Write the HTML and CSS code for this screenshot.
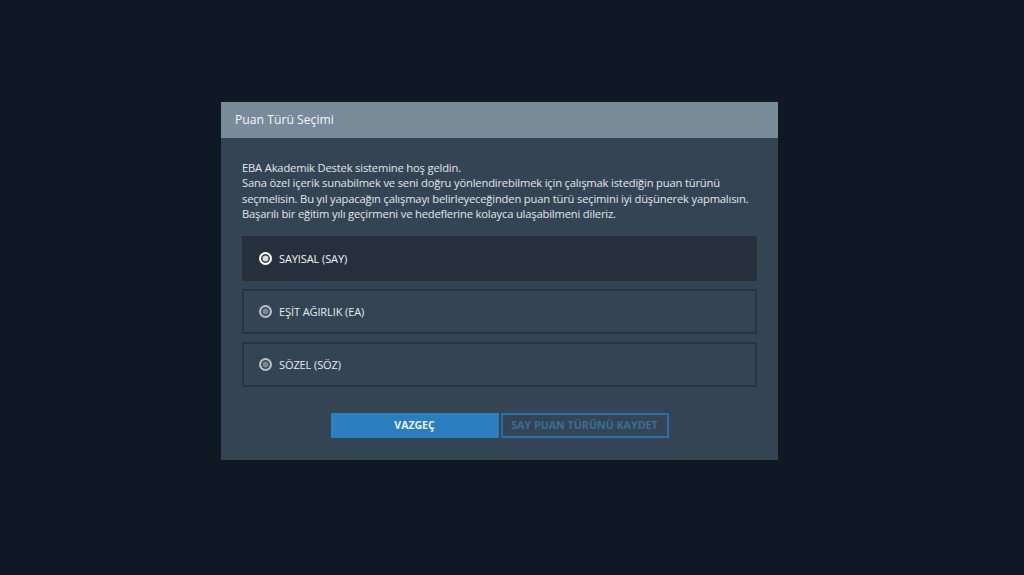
FILE: index.html
```html
<!DOCTYPE html>
<html lang="tr">
<head>
    <meta charset="UTF-8">
    <meta name="viewport" content="width=device-width, initial-scale=1.0">
    <title>Puan Türü Seçimi</title>
    <link rel="stylesheet" href="styles.css">
</head>
<body>

<div class="overlay">
    <div class="modal">
        <div class="modal-header">Puan Türü Seçimi</div>
        <div class="modal-body">
            <p class="intro">
                EBA Akademik Destek sistemine hoş geldin.<br>
                Sana özel içerik sunabilmek ve seni doğru yönlendirebilmek için çalışmak istediğin puan türünü
                seçmelisin. Bu yıl yapacağın çalışmayı belirleyeceğinden puan türü seçimini iyi düşünerek yapmalısın.
                Başarılı bir eğitim yılı geçirmeni ve hedeflerine kolayca ulaşabilmeni dileriz.
            </p>

            <div class="options">
                <div class="option selected"><span class="radio"></span>SAYISAL (SAY)</div>
                <div class="option"><span class="radio"></span>EŞİT AĞIRLIK (EA)</div>
                <div class="option"><span class="radio"></span>SÖZEL (SÖZ)</div>
            </div>

            <div class="actions">
                <div class="btn btn-cancel">VAZGEÇ</div>
                <div class="btn btn-save">SAY PUAN TÜRÜNÜ KAYDET</div>
            </div>
        </div>
    </div>
</div>

</body>
</html>
```

FILE: styles.css
```css
body {
    margin: 0;
    background-color: #0e1924;
    font-family: "Open Sans", "Noto Sans", sans-serif;
    color: #dde2e6;
}
.overlay {
    height: 575px;
    display: flex;
    padding: 102px 0 0 221px;
    box-sizing: border-box;
}
.modal {
    width: 557px;
    height: 358px;
    background-color: #334555;
}
.modal-header {
    height: 36px;
    line-height: 36px;
    background-color: #788b99;
    color: #f4f6f8;
    font-size: 12.2px;
    padding-left: 14px;
}
.modal-body {
    padding: 22px 21px 0;
}
.intro {
    margin: 0;
    font-size: 11.2px;
    line-height: 15.3px;
    letter-spacing: -0.17px;
    color: #e2e6ea;
}
.options {
    display: flex;
    flex-direction: column;
    gap: 8px;
    margin-top: 15px;
}
.option {
    height: 45px;
    box-sizing: border-box;
    border: 2px solid #263545;
    display: flex;
    align-items: center;
    padding-left: 15px;
    font-size: 11px;
    letter-spacing: -0.1px;
    color: #e6eaee;
}
.option.selected {
    background-color: #25303c;
    border-color: #25303c;
    color: #f4f6f8;
}
.radio {
    width: 9px;
    height: 9px;
    border-radius: 50%;
    border: 2px solid #b9c1c8;
    background-color: #7d8892;
    box-shadow: inset 0 0 0 1.5px #334555;
    margin-right: 7px;
}
.option.selected .radio {
    border-color: #ffffff;
    background-color: #d5d9dd;
    box-shadow: inset 0 0 0 1.5px #25303c;
}
.actions {
    display: flex;
    justify-content: center;
    gap: 2px;
    margin-top: 26px;
}
.btn {
    width: 168px;
    height: 25px;
    box-sizing: border-box;
    line-height: 21px;
    text-align: center;
    font-size: 10.5px;
    font-weight: bold;
}
.btn-cancel {
    background-color: #2b7fbf;
    border: 2px solid #2b7fbf;
    color: #e6f0f8;
}
.btn-save {
    border: 2px solid #2a6fa3;
    color: #3b6d93;
    font-size: 10.7px;
}
```
